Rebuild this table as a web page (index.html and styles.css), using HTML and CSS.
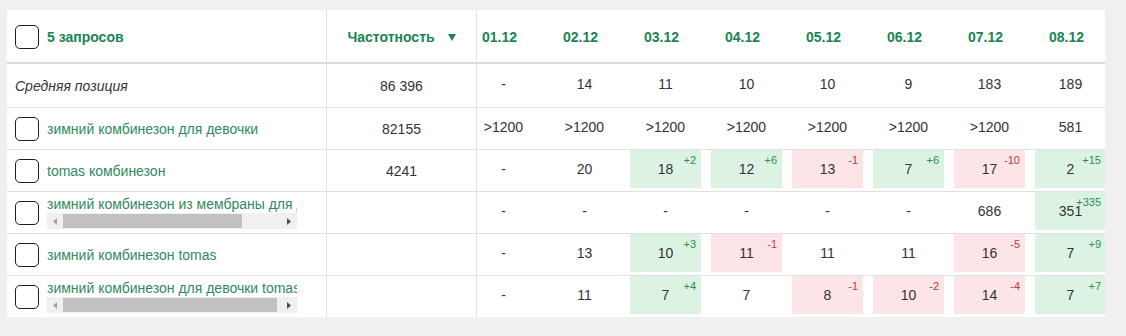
FILE: index.html
```html
<!DOCTYPE html>
<html lang="ru">
<head>
<meta charset="utf-8">
<title>Позиции</title>
<link rel="stylesheet" href="styles.css">
</head>
<body>
<div class="page">
  <div class="grid">
    <div class="fixed">
      <div class="row head">
        <div class="c-query"><span class="cb"></span><span class="title">5 запросов</span></div>
        <div class="c-freq"><span class="title">Частотность</span><svg class="sort" width="8" height="7" viewBox="0 0 8 7"><polygon points="0,0 8,0 4,7" fill="#1b8452"/></svg></div>
      </div>
      <div class="row first">
        <div class="c-query"><span class="avg">Средняя позиция</span></div>
        <div class="c-freq">86 396</div>
      </div>
      <div class="row">
        <div class="c-query"><span class="cb"></span><span class="q">зимний комбинезон для девочки</span></div>
        <div class="c-freq">82155</div>
      </div>
      <div class="row">
        <div class="c-query"><span class="cb"></span><span class="q">tomas комбинезон</span></div>
        <div class="c-freq">4241</div>
      </div>
      <div class="row">
        <div class="c-query"><span class="cb"></span>
          <div class="qbox">
            <div class="q clip">зимний комбинезон из мембраны для девочки</div>
            <div class="hscroll">
              <span class="arr"><svg width="4" height="7" viewBox="0 0 4 7"><polygon points="4,0 4,7 0,3.5" fill="#a3a3a3"/></svg></span>
              <span class="track"><span class="thumb t1"></span></span>
              <span class="arr"><svg width="4" height="7" viewBox="0 0 4 7"><polygon points="0,0 0,7 4,3.5" fill="#505050"/></svg></span>
            </div>
          </div>
        </div>
        <div class="c-freq"></div>
      </div>
      <div class="row">
        <div class="c-query"><span class="cb"></span><span class="q">зимний комбинезон tomas</span></div>
        <div class="c-freq"></div>
      </div>
      <div class="row last">
        <div class="c-query"><span class="cb"></span>
          <div class="qbox">
            <div class="q clip">зимний комбинезон для девочки tomas</div>
            <div class="hscroll">
              <span class="arr"><svg width="4" height="7" viewBox="0 0 4 7"><polygon points="4,0 4,7 0,3.5" fill="#a3a3a3"/></svg></span>
              <span class="track"><span class="thumb t2"></span></span>
              <span class="arr"><svg width="4" height="7" viewBox="0 0 4 7"><polygon points="0,0 0,7 4,3.5" fill="#505050"/></svg></span>
            </div>
          </div>
        </div>
        <div class="c-freq"></div>
      </div>
    </div>

    <div class="scroll">
      <div class="inner">
        <div class="row head">
          <div class="hd">01.12</div><div class="hd">02.12</div><div class="hd">03.12</div><div class="hd">04.12</div>
          <div class="hd">05.12</div><div class="hd">06.12</div><div class="hd">07.12</div><div class="hd">08.12</div>
        </div>
        <div class="row first">
          <div class="cell"><div class="v">-</div></div>
          <div class="cell"><div class="v">14</div></div>
          <div class="cell"><div class="v">11</div></div>
          <div class="cell"><div class="v">10</div></div>
          <div class="cell"><div class="v">10</div></div>
          <div class="cell"><div class="v">9</div></div>
          <div class="cell"><div class="v">183</div></div>
          <div class="cell"><div class="v">189</div></div>
        </div>
        <div class="row">
          <div class="cell"><div class="v">&gt;1200</div></div>
          <div class="cell"><div class="v">&gt;1200</div></div>
          <div class="cell"><div class="v">&gt;1200</div></div>
          <div class="cell"><div class="v">&gt;1200</div></div>
          <div class="cell"><div class="v">&gt;1200</div></div>
          <div class="cell"><div class="v">&gt;1200</div></div>
          <div class="cell"><div class="v">&gt;1200</div></div>
          <div class="cell"><div class="v">581</div></div>
        </div>
        <div class="row">
          <div class="cell"><div class="v">-</div></div>
          <div class="cell"><div class="v">20</div></div>
          <div class="cell"><div class="v up">18<span class="d">+2</span></div></div>
          <div class="cell"><div class="v up">12<span class="d">+6</span></div></div>
          <div class="cell"><div class="v down">13<span class="d">-1</span></div></div>
          <div class="cell"><div class="v up">7<span class="d">+6</span></div></div>
          <div class="cell"><div class="v down">17<span class="d">-10</span></div></div>
          <div class="cell"><div class="v up">2<span class="d">+15</span></div></div>
        </div>
        <div class="row">
          <div class="cell"><div class="v">-</div></div>
          <div class="cell"><div class="v">-</div></div>
          <div class="cell"><div class="v">-</div></div>
          <div class="cell"><div class="v">-</div></div>
          <div class="cell"><div class="v">-</div></div>
          <div class="cell"><div class="v">-</div></div>
          <div class="cell"><div class="v">686</div></div>
          <div class="cell"><div class="v up">351<span class="d">+335</span></div></div>
        </div>
        <div class="row">
          <div class="cell"><div class="v">-</div></div>
          <div class="cell"><div class="v">13</div></div>
          <div class="cell"><div class="v up">10<span class="d">+3</span></div></div>
          <div class="cell"><div class="v down">11<span class="d">-1</span></div></div>
          <div class="cell"><div class="v">11</div></div>
          <div class="cell"><div class="v">11</div></div>
          <div class="cell"><div class="v down">16<span class="d">-5</span></div></div>
          <div class="cell"><div class="v up">7<span class="d">+9</span></div></div>
        </div>
        <div class="row last">
          <div class="cell"><div class="v">-</div></div>
          <div class="cell"><div class="v">11</div></div>
          <div class="cell"><div class="v up">7<span class="d">+4</span></div></div>
          <div class="cell"><div class="v">7</div></div>
          <div class="cell"><div class="v down">8<span class="d">-1</span></div></div>
          <div class="cell"><div class="v down">10<span class="d">-2</span></div></div>
          <div class="cell"><div class="v down">14<span class="d">-4</span></div></div>
          <div class="cell"><div class="v up">7<span class="d">+7</span></div></div>
        </div>
      </div>
    </div>
  </div>
</div>
</body>
</html>
```

FILE: styles.css
```css
* { box-sizing: border-box; }

html, body {
  margin: 0;
  padding: 0;
  background: #f0f0f0;
}

body {
  font-family: "Liberation Sans", Arial, sans-serif;
  font-size: 14px;
  color: #333;
}

.page {
  padding: 10px 0 0 7px;
  height: 336px;
}

.grid {
  display: flex;
  width: 1098px;
  background: #fff;
}

.fixed {
  flex: none;
  width: 470px;
}

.scroll {
  flex: none;
  width: 628px;
  overflow: hidden;
}

.inner {
  width: 648px;
  margin-left: -14px;
}

.row {
  display: flex;
  height: 42px;
  border-bottom: 1px solid #e0e0e0;
}

.row.head {
  height: 54px;
  border-bottom: 2px solid #dcdcdc;
  padding-top: 2px;
}

.row.first { height: 44px; }

.row.last {
  height: 41px;
  border-bottom: none;
}

.c-query {
  width: 320px;
  border-right: 1px solid #e0e0e0;
  display: flex;
  align-items: center;
  padding-left: 8px;
  gap: 8px;
  margin-top: 0;
}

.head .c-query, .head .c-freq { margin-top: -2px; padding-top: 2px; }

.c-freq {
  width: 150px;
  border-right: 1px solid #e0e0e0;
  display: flex;
  align-items: center;
  justify-content: center;
}

.title {
  font-weight: bold;
  color: #1b8452;
}

.sort {
  margin-left: 13px;
  display: block;
}

.cb {
  flex: none;
  width: 24px;
  height: 24px;
  border: 1px solid #1e1e1e;
  border-radius: 5px;
  background: #fff;
}

.avg {
  font-style: italic;
  color: #333;
}

.q {
  color: #2f8a5e;
  white-space: nowrap;
}

.qbox {
  width: 250px;
  display: flex;
  flex-direction: column;
}

.q.clip {
  overflow: hidden;
  line-height: 16px;
  height: 16px;
}

.hscroll {
  display: flex;
  align-items: center;
  height: 16px;
  background: #f0f0f0;
  margin-top: 1px;
}

.arr {
  flex: none;
  width: 16px;
  height: 16px;
  display: flex;
  align-items: center;
  justify-content: center;
}

.arr svg { display: block; }

.track {
  flex: 1;
  height: 16px;
  display: flex;
  align-items: center;
}

.thumb {
  height: 14px;
  background: #c1c1c1;
}

.thumb.t1 { width: 179px; }
.thumb.t2 { width: 214px; }

.hd {
  flex: none;
  width: 81px;
  display: flex;
  align-items: center;
  justify-content: center;
  padding-right: 8px;
  font-weight: bold;
  color: #1b8452;
}

.cell {
  flex: none;
  width: 81px;
  padding: 0 5px 3px;
  display: flex;
}

.v {
  flex: 1;
  position: relative;
  display: flex;
  align-items: center;
  justify-content: center;
}

.v.up { background: #dcf3e3; }
.v.down { background: #fde4e6; }

.d {
  position: absolute;
  top: 4px;
  right: 5px;
  font-size: 11px;
}

.up .d { color: #2e8b57; }
.down .d { color: #c0393f; }
```
